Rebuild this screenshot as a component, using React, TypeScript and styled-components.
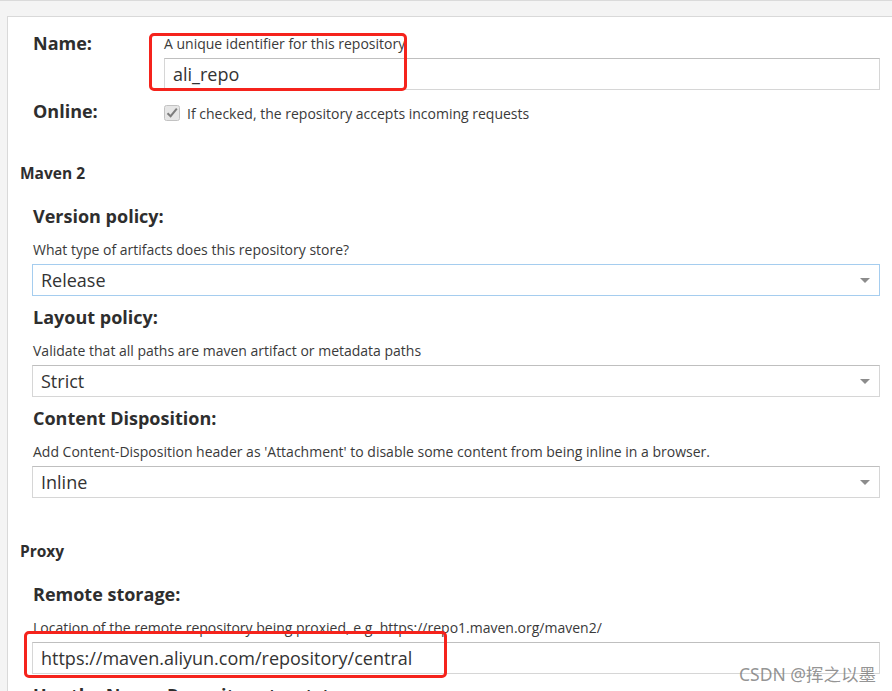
import React from 'react';
import styled, { createGlobalStyle } from 'styled-components';

const GlobalStyle = createGlobalStyle`
  html, body {
    margin: 0;
    padding: 0;
    overflow: hidden;
  }
  body {
    font-family: 'Open Sans', Lato, sans-serif;
    color: #333333;
  }
`;

interface Field {
  label: string;
  help: string;
  value: string;
  focused?: boolean;
}

const mavenFields: Field[] = [
  {
    label: 'Version policy:',
    help: 'What type of artifacts does this repository store?',
    value: 'Release',
    focused: true,
  },
  {
    label: 'Layout policy:',
    help: 'Validate that all paths are maven artifact or metadata paths',
    value: 'Strict',
  },
  {
    label: 'Content Disposition:',
    help: "Add Content-Disposition header as 'Attachment' to disable some content from being inline in a browser.",
    value: 'Inline',
  },
];

const CheckIcon = () => (
  <svg width="16" height="16" viewBox="0 0 16 16">
    <rect x="0.5" y="0.5" width="15" height="15" rx="2" fill="#e6e6e6" stroke="#c2c2c2" />
    <path d="M3.5 8.2 L6.6 11.2 L12.8 3.6" fill="none" stroke="#7d7d7d" strokeWidth="2" />
  </svg>
);

const SelectBox = ({ value, focused }: { value: string; focused?: boolean }) => (
  <Select $focused={focused}>
    <span>{value}</span>
    <Caret />
  </Select>
);

const App = () => {
  return (
    <Page>
      <GlobalStyle />
      <Panel>
        <Row>
          <Label>Name:</Label>
          <RowBody>
            <Help>A unique identifier for this repository</Help>
            <TextInput>ali_repo</TextInput>
            <Annotation $top={1} $left={-15} $width={258} $height={58} />
          </RowBody>
        </Row>
        <Row $gap={10}>
          <Label>Online:</Label>
          <CheckLine>
            <CheckIcon />
            <span>If checked, the repository accepts incoming requests</span>
          </CheckLine>
        </Row>

        <SectionTitle $gap={42}>Maven 2</SectionTitle>
        {mavenFields.map((f, i) => (
          <FieldBlock key={f.label} $gap={i === 0 ? 23 : 10}>
            <Label>{f.label}</Label>
            <FieldHelp>{f.help}</FieldHelp>
            <SelectBox value={f.value} focused={f.focused} />
          </FieldBlock>
        ))}

        <SectionTitle $gap={44}>Proxy</SectionTitle>
        <FieldBlock $gap={23}>
          <Label>Remote storage:</Label>
          <FieldHelp>
            Location of the remote repository being proxied, e.g. https://repo1.maven.org/maven2/
          </FieldHelp>
          <InputWrap>
            <TextInput>https://maven.aliyun.com/repository/central</TextInput>
            <Annotation $top={-11} $left={-8} $width={423} $height={47} />
          </InputWrap>
        </FieldBlock>
        <FieldBlock $gap={10}>
          <Label>Use the Nexus Repository truststore:</Label>
        </FieldBlock>
      </Panel>
      <Watermark>CSDN @挥之以墨</Watermark>
    </Page>
  );
};

const Page = styled.div`
  position: relative;
  height: 100vh;
  box-sizing: border-box;
  background: #f4f4f4;
  border-top: 1px solid #dadada;
  padding: 15px 0 0 7px;
  overflow: hidden;
`;

const Panel = styled.div`
  background: #ffffff;
  border-top: 1px solid #d9d9d9;
  border-left: 1px solid #d9d9d9;
  min-height: 100%;
  padding: 15px 12px 0 12px;
`;

const Row = styled.div<{ $gap?: number }>`
  display: grid;
  grid-template-columns: 132px 1fr;
  margin-left: 12px;
  margin-top: ${({ $gap }) => $gap || 0}px;
`;

const RowBody = styled.div`
  position: relative;
  display: flex;
  flex-direction: column;
`;

const Label = styled.div`
  padding-left: 1px;
  font-weight: 700;
  font-size: 18px;
  line-height: 22px;
  color: #2e2e2e;
  white-space: nowrap;
`;

const Help = styled.div`
  margin-top: 4px;
  margin-bottom: 6px;
  font-size: 14px;
  line-height: 16px;
  color: #3a3a3a;
  white-space: nowrap;
`;

const FieldHelp = styled(Help)`
  margin-top: 15px;
  padding-left: 1px;
`;

const TextInput = styled.div`
  box-sizing: border-box;
  height: 32px;
  padding: 0 8px;
  display: flex;
  align-items: center;
  border: 1px solid #d6d6d6;
  border-top-color: #bfbfbf;
  font-size: 18px;
  color: #333333;
  background: #ffffff;
`;

const Select = styled.div<{ $focused?: boolean }>`
  box-sizing: border-box;
  height: 32px;
  padding: 0 9px 0 8px;
  display: flex;
  align-items: center;
  justify-content: space-between;
  border: 1px solid ${({ $focused }) => ($focused ? '#a5cdef' : '#d6d6d6')};
  border-top-color: ${({ $focused }) => ($focused ? '#a5cdef' : '#bfbfbf')};
  font-size: 18px;
  color: #333333;
  background: #ffffff;
`;

const Caret = styled.i`
  width: 0;
  height: 0;
  border-left: 5px solid transparent;
  border-right: 5px solid transparent;
  border-top: 5px solid #8c8c8c;
`;

const CheckLine = styled.div`
  display: flex;
  align-items: center;
  gap: 7px;
  padding-top: 4px;
  font-size: 14px;
  line-height: 17px;
  color: #3a3a3a;
`;

const SectionTitle = styled.div<{ $gap: number }>`
  margin-top: ${({ $gap }) => $gap}px;
  font-weight: 700;
  font-size: 15.5px;
  line-height: 18px;
  color: #2e2e2e;
`;

const FieldBlock = styled.div<{ $gap: number }>`
  display: flex;
  flex-direction: column;
  margin-left: 12px;
  margin-top: ${({ $gap }) => $gap}px;
`;

const InputWrap = styled.div`
  position: relative;
`;

const Annotation = styled.div<{ $top: number; $left: number; $width: number; $height: number }>`
  position: absolute;
  top: ${({ $top }) => $top}px;
  left: ${({ $left }) => $left}px;
  width: ${({ $width }) => $width}px;
  height: ${({ $height }) => $height}px;
  box-sizing: border-box;
  border: 3px solid #f5231c;
  border-radius: 5px;
  pointer-events: none;
`;

const Watermark = styled.div`
  position: absolute;
  right: 16px;
  bottom: 7px;
  font-family: 'Noto Sans', 'Noto Sans CJK SC', sans-serif;
  font-size: 17.5px;
  line-height: 20px;
  color: rgba(120, 120, 120, 0.8);
`;

export default App;
